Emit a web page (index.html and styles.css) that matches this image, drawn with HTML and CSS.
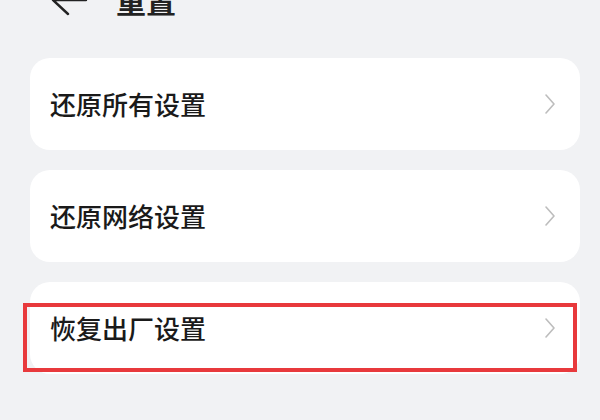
FILE: index.html
```html
<!DOCTYPE html>
<html lang="zh-CN">
<head>
<meta charset="utf-8">
<title>重置</title>
<link rel="stylesheet" href="styles.css">
</head>
<body>
<header class="header">
  <div class="header-row">
    <svg class="back" width="38" height="38" viewBox="0 0 38 38" fill="none" stroke="#222" stroke-width="2.4" stroke-linecap="round" stroke-linejoin="round">
      <path d="M3 19 H36 M3 19 L18 5 M3 19 L18 33"/>
    </svg>
    <h1 class="title">重置</h1>
  </div>
</header>
<main class="list">
  <div class="card">
    <span class="label">还原所有设置</span>
    <svg class="chev" width="12" height="22" viewBox="0 0 12 22" fill="none" stroke="#bdbdbd" stroke-width="1.6" stroke-linecap="round" stroke-linejoin="round"><path d="M2 2 L10 11 L2 20"/></svg>
  </div>
  <div class="card">
    <span class="label">还原网络设置</span>
    <svg class="chev" width="12" height="22" viewBox="0 0 12 22" fill="none" stroke="#bdbdbd" stroke-width="1.6" stroke-linecap="round" stroke-linejoin="round"><path d="M2 2 L10 11 L2 20"/></svg>
  </div>
  <div class="card card-marked">
    <span class="label">恢复出厂设置</span>
    <svg class="chev" width="12" height="22" viewBox="0 0 12 22" fill="none" stroke="#bdbdbd" stroke-width="1.6" stroke-linecap="round" stroke-linejoin="round"><path d="M2 2 L10 11 L2 20"/></svg>
    <div class="highlight"></div>
  </div>
</main>
</body>
</html>
```
FILE: styles.css
```css
html, body {
  margin: 0;
  padding: 0;
}
body {
  background: #f1f2f4;
  width: 600px;
  height: 420px;
  overflow: hidden;
  font-family: "Noto Sans CJK SC", "Noto Sans", sans-serif;
  color: #1c1c1c;
}
.header {
  display: flex;
  align-items: flex-start;
  height: 58px;
}
.header-row {
  display: flex;
  align-items: center;
  height: 38px;
  margin-top: -19px;
  padding-left: 50px;
  gap: 28px;
}
.back {
  display: block;
}
.title {
  margin: 0;
  font-size: 30px;
  line-height: 38px;
  font-weight: 700;
  color: #222;
}
.list {
  display: flex;
  flex-direction: column;
  gap: 20px;
  padding: 0 20px 0 30px;
}
.card {
  position: relative;
  display: flex;
  align-items: center;
  justify-content: space-between;
  height: 92px;
  padding: 0 24px 0 20px;
  background: #ffffff;
  border-radius: 20px;
}
.label {
  font-size: 26px;
  line-height: 1;
  font-weight: 500;
  color: #1a1a1a;
}
.chev {
  display: block;
}
.highlight {
  position: absolute;
  left: -7px;
  top: 21px;
  width: 554px;
  height: 69px;
  box-sizing: border-box;
  border: 4px solid #e8393c;
}
```
